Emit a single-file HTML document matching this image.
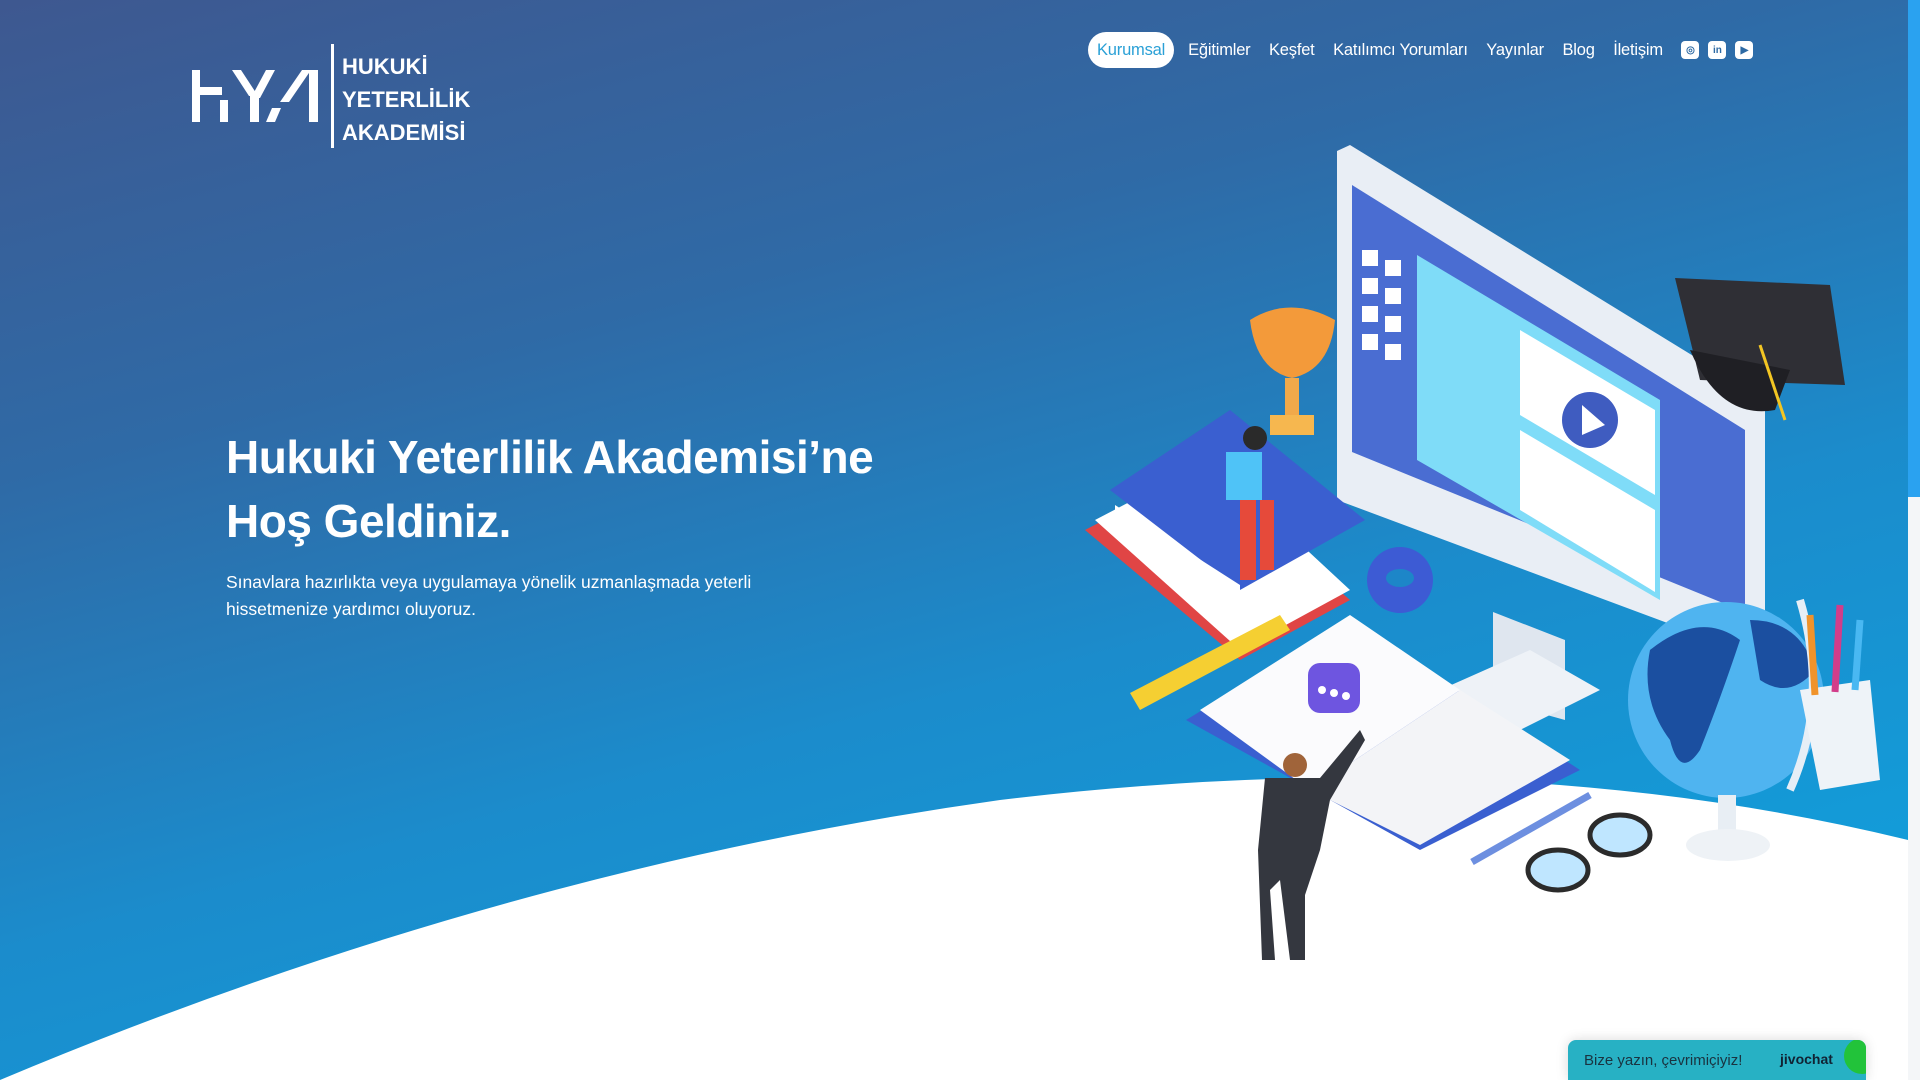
<!DOCTYPE html>
<html><head><meta charset="utf-8"><style>
*{margin:0;padding:0;box-sizing:border-box}
html,body{width:1920px;height:1080px;overflow:hidden}
body{font-family:"Liberation Sans",Arial,sans-serif;background:#fff;position:relative}
#bg{position:absolute;left:0;top:0;width:1908px;height:1080px;background:linear-gradient(165deg,#3e5890 0%,#2f6aa6 30%,#1b8ccc 60%,#0ea5e0 100%)}
#sb{position:absolute;right:0;top:0;width:12px;height:1080px;background:#f4f6f8}
#sb div{width:12px;height:497px;background:#2aa2f0}
.logo-div{position:absolute;left:331px;top:44px;width:3px;height:104px;background:#fff}
.logo-t{position:absolute;left:342px;top:50px;color:#fff;font-weight:bold;font-size:22px;line-height:33px}
nav{position:absolute;left:1088px;top:32px;height:36px;display:flex;align-items:center;color:#fff;font-size:16.5px}
nav span{margin-right:18.5px;letter-spacing:-0.2px}
nav .act{background:#fff;color:#2aa0d6;border-radius:18px;padding:0 9px;height:36px;line-height:36px;margin-right:14px}
.ic{width:18px;height:18px;background:#fff;border-radius:4px;margin-right:9px;display:flex;align-items:center;justify-content:center;color:#2d6aa4;font-size:10px;font-weight:bold}
h1{position:absolute;left:226px;top:425px;color:#fff;font-size:46px;line-height:64px;font-weight:bold;letter-spacing:-0.5px}
p.sub{position:absolute;left:226px;top:569px;color:#fff;font-size:17.5px;line-height:27px;width:600px}
.chat{position:absolute;left:1568px;top:1040px;width:298px;height:40px;background:#27b1c4;border-radius:8px 8px 0 0;overflow:hidden;box-shadow:0 0 12px rgba(0,0,0,.15)}
.chat .t{position:absolute;left:16px;top:12px;font-size:15px;color:#1a3340}
.chat .j{position:absolute;left:212px;top:11px;font-size:14px;font-weight:bold;color:#123}
.chat .g{position:absolute;right:-14px;top:-2px;width:36px;height:36px;border-radius:50%;background:#22c33a}
</style></head><body>
<div id="bg"></div>
<svg style="position:absolute;left:0;top:0" width="1920" height="1080">
<path d="M0 1080 Q500 870 1000 800 Q1500 740 1908 840 L1908 1080 Z" fill="#fff"/>
<g fill="#fff">
<rect x="192" y="70" width="8" height="52"/>
<rect x="200" y="87" width="22" height="8"/>
<rect x="220" y="100" width="8" height="22"/>
<polygon points="232,70 241,70 258,96 249,96"/>
<polygon points="266,70 275,70 260,98 251,98"/>
<rect x="250" y="96" width="9" height="26"/>
<polygon points="266,122 275,122 281,108 272,108"/>
<polygon points="280,102 302,70 311,70 289,102"/>
<rect x="309" y="70" width="9" height="52"/>
</g>
<g>
<ellipse cx="1330" cy="880" rx="260" ry="60" fill="#fff" opacity=".35"/>
<polygon points="1337,151 1350,145 1765,400 1765,640 1740,650 1337,500" fill="#e9eef5"/>
<polygon points="1352,185 1745,430 1745,612 1352,452" fill="#4a6dd2"/>
<polygon points="1417,255 1660,400 1660,600 1417,460" fill="#7fdcf8"/>
<polygon points="1520,330 1655,410 1655,495 1520,415" fill="#fff"/>
<polygon points="1520,430 1655,510 1655,592 1520,510" fill="#fff"/>
<circle cx="1590" cy="420" r="28" fill="#3f5cc0"/>
<polygon points="1582,405 1605,425 1582,435" fill="#fff"/>
<g fill="#fff"><rect x="1362" y="250" width="16" height="16"/><rect x="1385" y="260" width="16" height="16"/><rect x="1362" y="278" width="16" height="16"/><rect x="1385" y="288" width="16" height="16"/><rect x="1362" y="306" width="16" height="16"/><rect x="1385" y="316" width="16" height="16"/><rect x="1362" y="334" width="16" height="16"/><rect x="1385" y="344" width="16" height="16"/></g>
<polygon points="1493,612 1565,640 1565,720 1493,700" fill="#dfe6ef"/>
<polygon points="1440,690 1530,650 1600,690 1510,735" fill="#eef2f7"/>
<polygon points="1675,278 1830,285 1845,385 1700,380" fill="#2f2f35"/>
<path d="M1690 350 Q1720 420 1775 410 L1790 370 Z" fill="#1f1f24"/>
<line x1="1760" y1="345" x2="1785" y2="420" stroke="#f3c623" stroke-width="3"/>
<path d="M1250 320 Q1290 295 1335 320 Q1330 370 1292 378 Q1256 370 1250 320Z" fill="#f39a3a"/>
<rect x="1285" y="378" width="14" height="40" fill="#f1a94a"/>
<rect x="1270" y="415" width="44" height="20" fill="#f6b74f"/>
<polygon points="1085,530 1200,470 1350,600 1240,660" fill="#e04545"/>
<polygon points="1095,520 1210,460 1350,590 1240,650" fill="#fff"/>
<polygon points="1110,490 1230,410 1365,520 1240,590" fill="#3a5fd0"/>
<polygon points="1115,505 1240,585 1240,610 1115,530" fill="#fff"/>
<circle cx="1255" cy="438" r="12" fill="#2a2a2a"/>
<rect x="1226" y="452" width="36" height="48" fill="#4fc3f7"/>
<rect x="1240" y="500" width="16" height="80" fill="#e64a3a"/>
<rect x="1260" y="500" width="14" height="70" fill="#e64a3a"/>
<circle cx="1400" cy="580" r="33" fill="#3d5bd4"/>
<ellipse cx="1400" cy="578" rx="14" ry="9" fill="#1d86c8"/>
<polygon points="1130,693 1280,615 1290,630 1140,710" fill="#f5cf32"/>
<polygon points="1186,720 1350,620 1580,770 1420,850" fill="#3a5fd0"/>
<polygon points="1200,710 1350,615 1460,690 1310,790" fill="#fbfbfd"/>
<polygon points="1310,790 1460,690 1570,760 1420,845" fill="#f3f4f7"/>
<rect x="1308" y="663" width="52" height="50" rx="12" fill="#6e55e0"/>
<g fill="#fff"><circle cx="1322" cy="690" r="4"/><circle cx="1334" cy="693" r="4"/><circle cx="1346" cy="696" r="4"/></g>
<circle cx="1295" cy="765" r="12" fill="#a0643a"/>
<path d="M1265 778 L1320 778 L1360 730 L1365 740 L1330 800 L1320 850 L1305 895 L1305 960 L1290 960 L1280 880 L1270 890 L1275 960 L1262 960 L1258 850 Z" fill="#34373f"/>
<circle cx="1726" cy="700" r="98" fill="#4fb4f0"/>
<path d="M1650 650 Q1700 610 1740 640 Q1720 700 1700 750 Q1680 780 1670 740 Q1640 700 1650 650Z" fill="#1b4fa0"/>
<path d="M1750 620 Q1800 620 1815 670 Q1790 700 1760 680Z" fill="#1b4fa0"/>
<path d="M1800 600 Q1830 700 1790 790" stroke="#e6eef6" stroke-width="8" fill="none"/>
<rect x="1718" y="795" width="18" height="45" fill="#e8eef4"/>
<ellipse cx="1728" cy="845" rx="42" ry="16" fill="#eef2f6"/>
<polygon points="1800,690 1870,680 1880,780 1820,790" fill="#eef3f8"/>
<g stroke-width="7"><line x1="1815" y1="695" x2="1810" y2="615" stroke="#f0932b"/><line x1="1835" y1="692" x2="1840" y2="605" stroke="#d23d8a"/><line x1="1855" y1="690" x2="1860" y2="620" stroke="#49b8f2"/></g>
<line x1="1472" y1="862" x2="1590" y2="795" stroke="#6d8fe0" stroke-width="7"/>
<ellipse cx="1558" cy="870" rx="30" ry="20" fill="#bfe6ff" stroke="#2b2b2b" stroke-width="5"/>
<ellipse cx="1620" cy="835" rx="30" ry="20" fill="#bfe6ff" stroke="#2b2b2b" stroke-width="5"/>
</g>
</svg>
<div class="logo-div"></div>
<div class="logo-t">HUKUKİ<br>YETERLİLİK<br>AKADEMİSİ</div>
<nav><span class="act">Kurumsal</span><span>Eğitimler</span><span>Keşfet</span><span>Katılımcı Yorumları</span><span>Yayınlar</span><span>Blog</span><span>İletişim</span><div class="ic">◎</div><div class="ic">in</div><div class="ic">▶</div></nav>
<h1>Hukuki Yeterlilik Akademisi’ne<br>Hoş Geldiniz.</h1>
<p class="sub">Sınavlara hazırlıkta veya uygulamaya yönelik uzmanlaşmada yeterli hissetmenize yardımcı oluyoruz.</p>
<div class="chat"><span class="t">Bize yazın, çevrimiçiyiz!</span><span class="j">jivochat</span><div class="g"></div></div>
<div id="sb"><div></div></div>
</body></html>
